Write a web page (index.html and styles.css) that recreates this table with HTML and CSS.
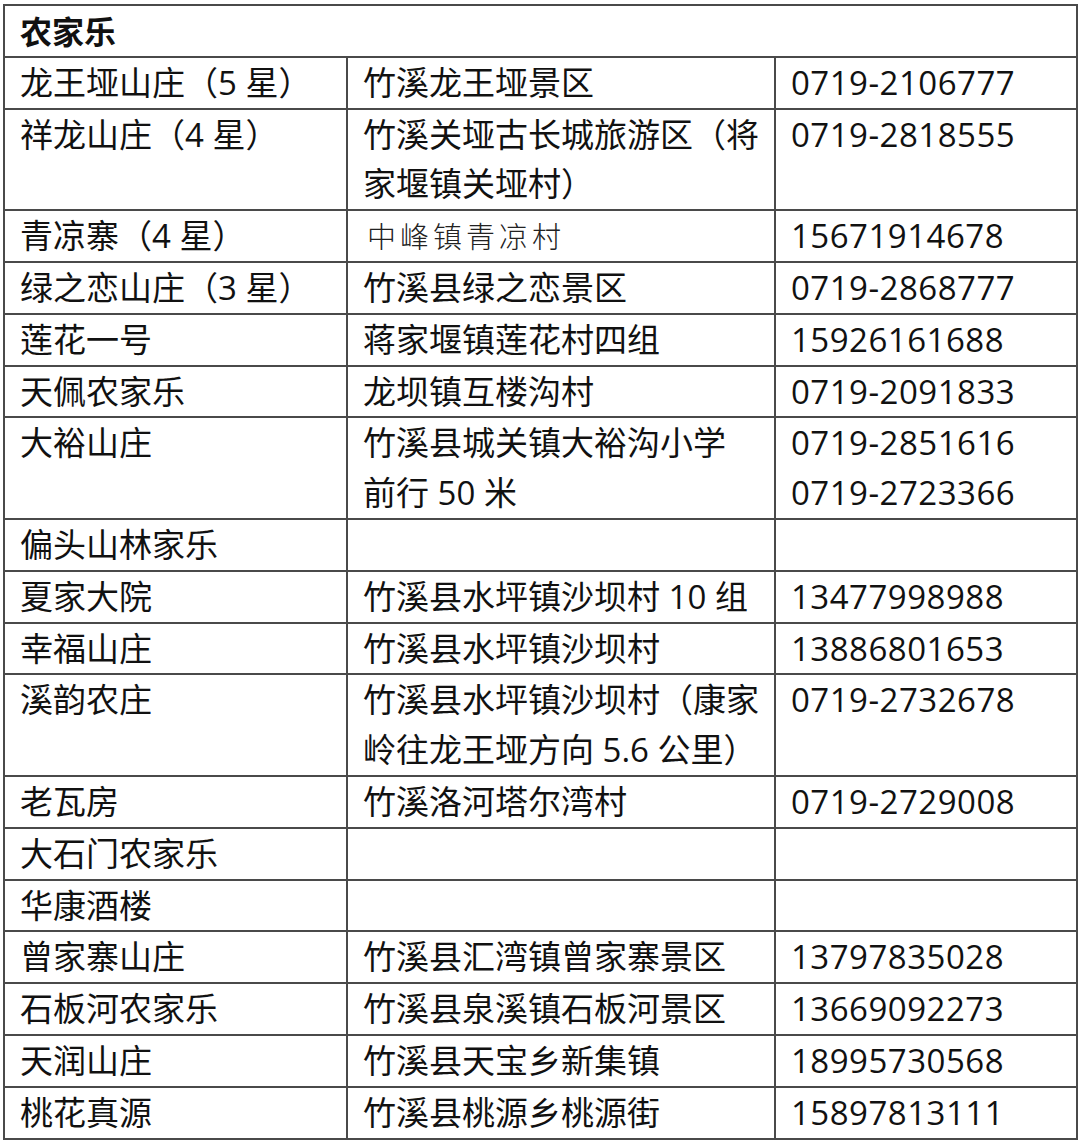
FILE: index.html
```html
<!DOCTYPE html>
<html lang="zh-CN">
<head>
<meta charset="utf-8">
<title>农家乐</title>
<link rel="stylesheet" href="styles.css">
</head>
<body>
<table class="farm-table">
  <colgroup>
    <col class="c-name">
    <col class="c-addr">
    <col class="c-tel">
  </colgroup>
  <thead>
    <tr><th colspan="3">农家乐</th></tr>
  </thead>
  <tbody>
    <tr><td>龙王垭山庄（5 星）</td><td>竹溪龙王垭景区</td><td class="tel">0719-2106777</td></tr>
    <tr><td>祥龙山庄（4 星）</td><td>竹溪关垭古长城旅游区（将<br>家堰镇关垭村）</td><td class="tel">0719-2818555</td></tr>
    <tr><td>青凉寨（4 星）</td><td class="thin">中峰镇青凉村</td><td class="tel">15671914678</td></tr>
    <tr><td>绿之恋山庄（3 星）</td><td>竹溪县绿之恋景区</td><td class="tel">0719-2868777</td></tr>
    <tr><td>莲花一号</td><td>蒋家堰镇莲花村四组</td><td class="tel">15926161688</td></tr>
    <tr><td>天佩农家乐</td><td>龙坝镇互楼沟村</td><td class="tel">0719-2091833</td></tr>
    <tr><td>大裕山庄</td><td>竹溪县城关镇大裕沟小学<br>前行 50 米</td><td class="tel">0719-2851616<br>0719-2723366</td></tr>
    <tr><td>偏头山林家乐</td><td></td><td></td></tr>
    <tr><td>夏家大院</td><td>竹溪县水坪镇沙坝村 10 组</td><td class="tel">13477998988</td></tr>
    <tr><td>幸福山庄</td><td>竹溪县水坪镇沙坝村</td><td class="tel">13886801653</td></tr>
    <tr><td>溪韵农庄</td><td>竹溪县水坪镇沙坝村（康家<br>岭往龙王垭方向 5.6 公里）</td><td class="tel">0719-2732678</td></tr>
    <tr><td>老瓦房</td><td>竹溪洛河塔尔湾村</td><td class="tel">0719-2729008</td></tr>
    <tr><td>大石门农家乐</td><td></td><td></td></tr>
    <tr><td>华康酒楼</td><td></td><td></td></tr>
    <tr><td>曾家寨山庄</td><td>竹溪县汇湾镇曾家寨景区</td><td class="tel">13797835028</td></tr>
    <tr><td>石板河农家乐</td><td>竹溪县泉溪镇石板河景区</td><td class="tel">13669092273</td></tr>
    <tr><td>天润山庄</td><td>竹溪县天宝乡新集镇</td><td class="tel">18995730568</td></tr>
    <tr><td>桃花真源</td><td>竹溪县桃源乡桃源街</td><td class="tel">15897813111</td></tr>
  </tbody>
</table>
</body>
</html>
```

FILE: styles.css
```css
html, body {
  margin: 0;
  background: #ffffff;
}
body {
  padding: 4px 4px 0 3px;
  font-family: "Open Sans", "Noto Sans CJK SC", sans-serif;
  color: #111111;
}
.farm-table {
  border-collapse: collapse;
  table-layout: fixed;
  width: 1073px;
}
.c-name { width: 343px; }
.c-addr { width: 428px; }
.c-tel { width: 302px; }
.farm-table th,
.farm-table td {
  border: 2px solid #4a4a4a;
  padding: 0 0 0 15px;
  font-size: 33px;
  line-height: 49.8px;
  text-align: left;
  vertical-align: top;
  white-space: nowrap;
  overflow: hidden;
}
.farm-table th {
  font-weight: 700;
  font-size: 32px;
  font-family: "Noto Sans CJK SC", sans-serif;
}
.farm-table .tel {
  letter-spacing: 0.5px;
}
.farm-table .thin {
  font-family: "Noto Sans CJK SC", sans-serif;
  font-weight: 300;
  font-size: 29px;
  letter-spacing: 4px;
  padding-left: 19px;
  color: #222222;
}
```
